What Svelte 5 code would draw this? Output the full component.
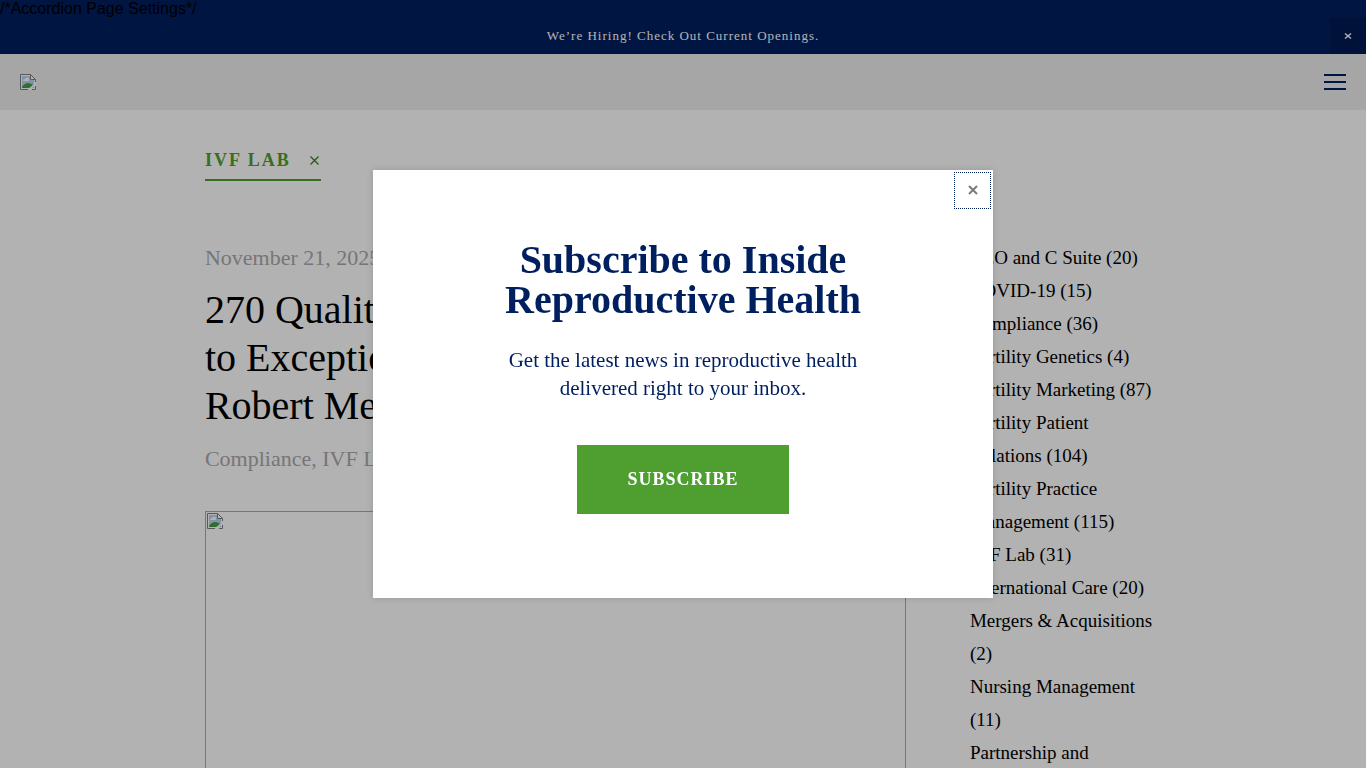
<script>
  let showBanner = $state(true);
  let showPopup = $state(true);

  const categories = [
    { name: 'CEO and C Suite', count: 20 },
    { name: 'COVID-19', count: 15 },
    { name: 'Compliance', count: 36 },
    { name: 'Fertility Genetics', count: 4 },
    { name: 'Fertility Marketing', count: 87 },
    { name: 'Fertility Patient Relations', count: 104 },
    { name: 'Fertility Practice Management', count: 115 },
    { name: 'IVF Lab', count: 31 },
    { name: 'International Care', count: 20 },
    { name: 'Mergers & Acquisitions', count: 2 },
    { name: 'Nursing Management', count: 11 },
    { name: 'Partnership and', count: null }
  ];
</script>

{#snippet missingImage()}
  <svg width="16" height="16" viewBox="0 0 16 16" aria-hidden="true">
    <path d="M.5 .5h10l5 5v10H.5z" fill="#fff" />
    <path d="M2 2h8v4h4v8H2z" fill="#b9d2f2" />
    <path d="M3 7a2 2 0 0 1 2-2a2 2 0 0 1 4 1v1H3z" fill="#fff" />
    <path d="M2 14v-1c2-3 4-4 6-4s4 1 5 2l-4 3z" fill="#43a047" />
    <path d="M16 8v2l-6 6H8z" fill="#fff" />
    <path d="M8 15.500H.5V.5h10l5 5V8M10.500 .5v5h5M15.500 12v3.500H12" fill="none" stroke="#808080" />
  </svg>
{/snippet}

<div class="page">
  <div class="top">
    <span class="stray">/*Accordion Page Settings*/</span>
    {#if showBanner}
      <div class="banner">
        <a href="#careers">We’re Hiring! Check Out Current Openings.</a>
        <button aria-label="Close announcement" onclick={() => (showBanner = false)}>
          <svg width="8" height="8" viewBox="0 0 8 8"><path d="M1 1.500l6 5M7 1.500l-6 5" stroke="#fff" stroke-width="1.500" /></svg>
        </button>
      </div>
    {/if}
  </div>

  <header>
    <a href="#home" aria-label="Home">{@render missingImage()}</a>
    <button class="burger" aria-label="Menu">
      <span></span>
      <span></span>
      <span></span>
    </button>
  </header>

  <main>
    <a class="filter" href="#all">
      IVF LAB
      <svg width="9" height="9" viewBox="0 0 9 9" aria-hidden="true"><path d="M.5 .5l8 8M8.500 .5l-8 8" stroke="#3c8020" stroke-width="1.300" /></svg>
    </a>

    <div class="columns">
      <article>
        <p class="meta">November 21, 2025</p>
        <h1>270 Quality<br />to Exceptional<br />Robert Mendola</h1>
        <p class="meta">Compliance, IVF Lab</p>
        <div class="picture">{@render missingImage()}</div>
      </article>

      <aside>
        <ul>
          {#each categories as category}
            <li>
              <a href="#category">{category.name} {category.count ? `(${category.count})` : ''}</a>
            </li>
          {/each}
        </ul>
      </aside>
    </div>
  </main>
</div>

{#if showPopup}
  <div class="overlay">
    <div class="popup" role="dialog" aria-modal="true" aria-labelledby="popup-title">
      <button class="close" aria-label="Close" onclick={() => (showPopup = false)}>
        <svg width="10" height="10" viewBox="0 0 10 10"><path d="M1 1l8 8M9 1l-8 8" stroke="#7b7b7b" stroke-width="2" /></svg>
      </button>
      <h2 id="popup-title">Subscribe to Inside Reproductive Health</h2>
      <p>Get the latest news in reproductive health delivered right to your inbox.</p>
      <a class="subscribe" href="#subscribe">SUBSCRIBE</a>
    </div>
  </div>
{/if}

<style>
  .page {
    height: 100vh;
    overflow: hidden;
    background: #fff;
    color: #000;
    font-family: 'Liberation Serif', 'Times New Roman', serif;
  }
  .page a {
    color: inherit;
    text-decoration: none;
  }
  button {
    padding: 0;
    border: 0;
    background: none;
    cursor: pointer;
  }
  svg {
    display: block;
  }
  p, h1, h2, ul {
    margin: 0;
  }

  .top {
    background: #001f5f;
  }
  .stray {
    display: block;
    font: 16px/18px 'Liberation Sans', Arial, sans-serif;
  }
  .banner {
    display: grid;
    grid-template-columns: 36px 1fr 36px;
    height: 36px;
    align-items: center;
    color: #fff;
    font-size: 13px;
    letter-spacing: 1px;
    text-align: center;
  }
  .banner a {
    grid-column: 2;
  }
  .banner button {
    display: grid;
    height: 36px;
    place-items: center;
    background: #001b52;
  }

  header {
    display: flex;
    height: 56px;
    padding: 0 20px;
    align-items: center;
    justify-content: space-between;
    background: #eee;
  }
  .burger {
    display: flex;
    width: 22px;
    flex-direction: column;
    gap: 5px;
  }
  .burger span {
    height: 2px;
    background: #001f5f;
  }

  main {
    width: 70%;
    margin: 0 auto;
    padding-top: 40px;
  }
  .filter {
    display: inline-flex;
    align-items: center;
    gap: 19px;
    padding: 0 2px 9px 0;
    border-bottom: 2px solid #4f9e30;
    font-size: 18px;
    font-weight: bold;
    line-height: 20px;
    letter-spacing: 2px;
  }
  .page .filter {
    color: #4f9e30;
  }
  .columns {
    display: flex;
    gap: 64px;
    margin-top: 60px;
  }
  article {
    flex: 11;
  }
  aside {
    flex: 3;
  }
  .meta {
    color: #aaa;
    font-size: 22px;
    line-height: 33px;
  }
  h1 {
    margin: 12px 0;
    font-size: 40px;
    font-weight: normal;
    line-height: 48px;
  }
  .picture {
    height: 460px;
    margin-top: 36px;
    padding: 1px;
    border: 1px solid #aaa;
  }
  ul {
    padding: 0;
    list-style: none;
    font-size: 19px;
    line-height: 33px;
  }

  .overlay {
    position: fixed;
    inset: 0;
    display: grid;
    place-items: center;
    background: rgba(0, 0, 0, .3);
    font-family: 'Liberation Serif', 'Times New Roman', serif;
  }
  .popup {
    position: relative;
    box-sizing: border-box;
    width: 620px;
    max-width: 100%;
    padding: 70px 120px 84px;
    background: #fff;
    box-shadow: 0 0 8px rgba(0, 0, 0, .15);
    color: #001f5f;
    text-align: center;
  }
  .close {
    position: absolute;
    top: 2px;
    right: 2px;
    display: grid;
    width: 37px;
    height: 37px;
    padding-bottom: 2px;
    place-items: center;
    border: 1px dotted #001f5f;
  }
  h2 {
    font-size: 40px;
    line-height: 40px;
  }
  .popup p {
    margin: 26px 0 43px;
    font-size: 21px;
    line-height: 28px;
  }
  .subscribe {
    display: inline-block;
    padding: 24px 50px;
    background: #4f9e30;
    color: #fff;
    font-size: 18px;
    font-weight: bold;
    line-height: 21px;
    letter-spacing: 1px;
    text-decoration: none;
    vertical-align: top;
  }
</style>
